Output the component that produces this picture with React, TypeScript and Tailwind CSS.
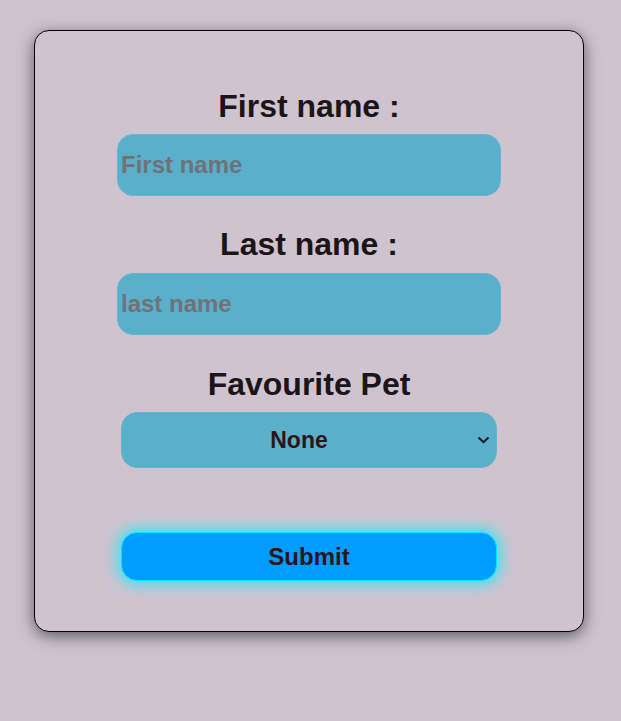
import { useState } from 'react';

export default function App() {
  const [first, setFirst] = useState('');
  const [last, setLast] = useState('');
  const [pet, setPet] = useState('none');

  const label = 'h-[37px] text-[32px] leading-[37px] font-bold text-[#1b1517]';
  const field =
    'w-[384px] h-[62px] rounded-[16px] bg-[#5aafcb] border border-[#62b6d0] pl-[3px] text-[24px] font-bold text-[#1b1517] placeholder:text-[#6f7377] outline-none';

  return (
    <div
      className="min-h-[721px] w-full bg-[#cfc3cf] pt-[30px] pl-[34px]"
      style={{ fontFamily: '"Liberation Sans", Arial, sans-serif' }}
    >
      <form
        onSubmit={(e) => e.preventDefault()}
        className="w-[550px] flex flex-col items-center rounded-[15px] border border-black bg-[#cfc3cf] pt-[57px] pb-[50px] shadow-[0_4px_16px_rgba(0,0,0,0.55)]"
      >
        <label className={label}>First name :</label>
        <input
          className={`${field} mt-[9px]`}
          placeholder="First name"
          value={first}
          onChange={(e) => setFirst(e.target.value)}
        />

        <label className={`${label} mt-[30px]`}>Last name :</label>
        <input
          className={`${field} mt-[10px]`}
          placeholder="last name"
          value={last}
          onChange={(e) => setLast(e.target.value)}
        />

        <label className={`${label} mt-[31px]`}>Favourite Pet</label>
        <div className="relative mt-[9px]">
          <select
            value={pet}
            onChange={(e) => setPet(e.target.value)}
            className="appearance-none w-[376px] h-[56px] rounded-[16px] bg-[#5aafcb] border border-[#62b6d0] pr-[20px] text-center text-[23px] font-bold text-[#2b1518] outline-none"
          >
            <option value="none">None</option>
            <option value="dog">Dog</option>
            <option value="cat">Cat</option>
          </select>
          {/* chevron */}
          <svg
            className="pointer-events-none absolute right-[7px] top-[24px]"
            width="13"
            height="8"
            viewBox="0 0 13 8"
            fill="none"
          >
            <path d="M1.5 1.5 L6.5 6.2 L11.5 1.5" stroke="#1b1517" strokeWidth="2" />
          </svg>
        </div>

        <button
          type="submit"
          className="mt-[64px] w-[376px] h-[49px] rounded-[16px] bg-[#009cff] border-[1.5px] border-[#00e8ff] text-[24px] font-bold text-[#2b1520] shadow-[0_0_14px_4px_rgba(0,240,255,0.7)]"
        >
          Submit
        </button>
      </form>
    </div>
  );
}
